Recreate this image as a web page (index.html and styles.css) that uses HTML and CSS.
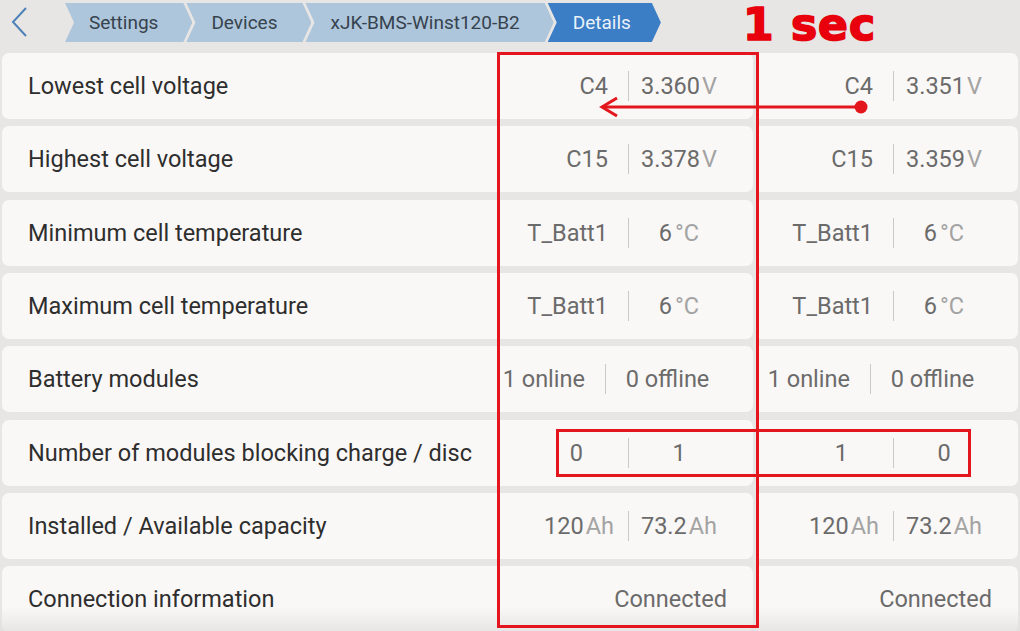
FILE: index.html
```html
<!DOCTYPE html>
<html>
<head>
<meta charset="utf-8">
<link rel="stylesheet" href="styles.css">
</head>
<body>
<div class="screen">
  <header class="topbar">
    <div class="back">
      <svg width="20" height="32" viewBox="0 0 20 32"><polyline points="17,2 4,16 17,30" fill="none" stroke="#4d82b8" stroke-width="2"/></svg>
    </div>
    <nav class="crumbs">
      <span class="crumb">Settings</span>
      <span class="crumb">Devices</span>
      <span class="crumb">xJK-BMS-Winst120-B2</span>
      <span class="crumb active">Details</span>
    </nav>
  </header>

  <main class="table">
    <div class="cell label">Lowest cell voltage</div>
    <div class="cell val"><span class="lv">C4</span><i class="sep"></i><span class="rv">3.360<u>V</u></span></div>
    <div class="cell val v2"><span class="lv">C4</span><i class="sep"></i><span class="rv">3.351<u>V</u></span></div>

    <div class="cell label">Highest cell voltage</div>
    <div class="cell val"><span class="lv">C15</span><i class="sep"></i><span class="rv">3.378<u>V</u></span></div>
    <div class="cell val v2"><span class="lv">C15</span><i class="sep"></i><span class="rv">3.359<u>V</u></span></div>

    <div class="cell label">Minimum cell temperature</div>
    <div class="cell val"><span class="lv">T_Batt1</span><i class="sep"></i><span class="rv">6<u class="deg">°C</u></span></div>
    <div class="cell val v2"><span class="lv">T_Batt1</span><i class="sep"></i><span class="rv">6<u class="deg">°C</u></span></div>

    <div class="cell label">Maximum cell temperature</div>
    <div class="cell val"><span class="lv">T_Batt1</span><i class="sep"></i><span class="rv">6<u class="deg">°C</u></span></div>
    <div class="cell val v2"><span class="lv">T_Batt1</span><i class="sep"></i><span class="rv">6<u class="deg">°C</u></span></div>

    <div class="cell label">Battery modules</div>
    <div class="cell val"><span class="lv">1 online</span><i class="sep"></i><span class="rv wide">0 offline</span></div>
    <div class="cell val v2"><span class="lv">1 online</span><i class="sep"></i><span class="rv wide">0 offline</span></div>

    <div class="cell label">Number of modules blocking charge / disc</div>
    <div class="cell val"><span class="lv num">0</span><i class="sep"></i><span class="rv">1</span></div>
    <div class="cell val v2"><span class="lv num">1</span><i class="sep"></i><span class="rv">0</span></div>

    <div class="cell label">Installed / Available capacity</div>
    <div class="cell val"><span class="lv cap">120<u>Ah</u></span><i class="sep"></i><span class="rv">73.2<u>Ah</u></span></div>
    <div class="cell val v2"><span class="lv cap">120<u>Ah</u></span><i class="sep"></i><span class="rv">73.2<u>Ah</u></span></div>

    <div class="cell label">Connection information</div>
    <div class="cell val"><span class="single">Connected</span></div>
    <div class="cell val v2"><span class="single">Connected</span></div>
  </main>

  <div class="fade"></div>

  <div class="note-title">1 sec</div>
  <div class="mark mark-col"></div>
  <div class="mark mark-row"></div>
  <svg class="arrow" width="280" height="30" viewBox="0 0 280 30">
    <line x1="5" y1="15" x2="264" y2="15" stroke="#e2161c" stroke-width="3"/>
    <polyline points="20,6 5,15 20,24" fill="none" stroke="#e2161c" stroke-width="3"/>
    <circle cx="264" cy="15" r="6.5" fill="#e2161c"/>
  </svg>
</div>
</body>
</html>
```

FILE: styles.css
```css
html, body {
  margin: 0;
  padding: 0;
  background: #e8e6e4;
}

.screen {
  position: relative;
  width: 1020px;
  height: 631px;
  overflow: hidden;
  background: #e8e6e4;
  font-family: Roboto, "Liberation Sans", sans-serif;
}

.topbar {
  height: 53px;
  display: flex;
  align-items: flex-start;
}

.back {
  width: 20px;
  margin: 6px 0 0 9px;
}

.crumbs {
  display: flex;
  margin: 3px 0 0 36px;
}

.crumb {
  height: 39px;
  display: flex;
  align-items: center;
  padding: 0 34px 0 25px;
  margin-right: -6px;
  background: #aec6db;
  color: #36424e;
  font-size: 19px;
  clip-path: polygon(0 0, calc(100% - 9px) 0, 100% 50%, calc(100% - 9px) 100%, 0 100%, 9px 50%);
}

.crumb:first-child { padding-left: 24px; }

.crumb.active {
  background: #3b7ec6;
  color: #eaf2fa;
  padding-right: 30px;
}

.table {
  display: grid;
  grid-template-columns: 474px 277px 265px;
  grid-auto-rows: 66px;
  row-gap: 7.35px;
  margin-left: 2px;
}

.cell {
  background: #faf8f6;
  display: flex;
  align-items: center;
  font-size: 23.5px;
  white-space: nowrap;
  overflow: hidden;
}

.label {
  border-radius: 7px 0 0 7px;
  padding-left: 26px;
  color: #2e2e2e;
}

.val {
  justify-content: flex-end;
  padding-right: 24px;
  border-radius: 0 7px 7px 0;
  color: #6b6b6b;
}

.v2 {
  margin-left: 3px;
}

.lv {
  padding-right: 20px;
  text-align: right;
}

.lv.num { padding-right: 45px; }
.lv.cap { padding-right: 14px; }

.sep {
  display: block;
  width: 1px;
  height: 30px;
  background: #cbc9c7;
}

.rv {
  width: 100px;
  text-align: center;
}

.rv.wide { width: 123px; }

u {
  text-decoration: none;
  color: #a3a3a3;
  margin-left: 2px;
}

u.deg { margin-left: 3px; }

.single {
  padding-right: 2px;
}

.fade {
  position: absolute;
  left: 0;
  right: 0;
  bottom: 0;
  height: 24px;
  background: linear-gradient(to bottom, rgba(232, 230, 228, 0), rgba(226, 224, 222, 0.75));
  pointer-events: none;
}

.note-title {
  position: absolute;
  left: 743px;
  top: 3px;
  font-family: "DejaVu Sans", sans-serif;
  font-weight: bold;
  font-size: 44px;
  line-height: 44px;
  color: #e8000c;
  letter-spacing: 1px;
  -webkit-text-stroke: 1.6px #e8000c;
  text-shadow: 0 0 1px #7a0000;
}

.mark {
  position: absolute;
  border: 3px solid #e2161c;
  box-sizing: border-box;
}

.mark-col {
  left: 497px;
  top: 52px;
  width: 262px;
  height: 576px;
}

.mark-row {
  left: 556px;
  top: 429px;
  width: 415px;
  height: 48px;
}

.arrow {
  position: absolute;
  left: 597px;
  top: 92px;
}
```
